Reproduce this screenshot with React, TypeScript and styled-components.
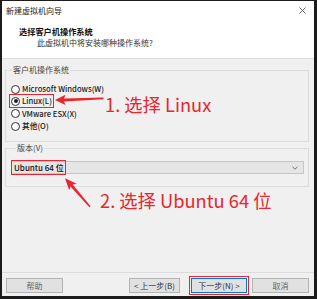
import React from 'react'
import styled, { createGlobalStyle } from 'styled-components'

const RED = '#e8262e'
const FONT = `"Noto Sans CJK SC", "Noto Sans", sans-serif`

const GlobalStyle = createGlobalStyle`
  html, body {
    margin: 0;
    padding: 0;
    background: #fff;
  }
  body {
    font-family: ${FONT};
  }
`

const Window = styled.div`
  position: relative;
  width: 317px;
  height: 299px;
  box-sizing: border-box;
  border-style: solid;
  border-color: #1c1c1c;
  border-width: 1px 3px 3px 2px;
  background: #f0f0f0;
  display: flex;
  flex-direction: column;
  overflow: hidden;
`

const TitleBar = styled.div`
  height: 19px;
  flex: none;
  background: #fff;
  display: flex;
  align-items: center;
  justify-content: space-between;
  padding: 0 8px 0 4px;
  font-size: 8px;
  color: #222;
`

const Header = styled.div`
  height: 39px;
  flex: none;
  box-sizing: border-box;
  background: #fff;
  border-bottom: 1px solid #dcdcdc;
  padding: 6px 0 0 17px;
`

const HeaderTitle = styled.div`
  font-size: 8.2px;
  line-height: 10px;
  font-weight: 700;
  color: #111;
`

const HeaderSub = styled.div`
  margin: 2px 0 0 18px;
  font-size: 8px;
  line-height: 10px;
  color: #333;
`

const Body = styled.div`
  flex: 1;
  display: flex;
  flex-direction: column;
`

const Group = styled.fieldset<{ $top: number; $pb: number }>`
  margin: ${(p) => p.$top}px 5px 0 3px;
  padding: 0 4px ${(p) => p.$pb}px 5px;
  border: 1px solid #dcdcdc;
  min-inline-size: 0;
`

const Legend = styled.legend<{ $indent: number }>`
  margin-left: ${(p) => p.$indent}px;
  padding: 0 1px;
  font-size: 8px;
  line-height: 10px;
  color: #444;
`

const RadioList = styled.div`
  padding-top: 8px;
  display: flex;
  flex-direction: column;
`

const RadioRow = styled.div`
  height: 12.3px;
  display: flex;
  align-items: center;
`

const RadioItem = styled.span<{ $marked?: boolean }>`
  display: inline-flex;
  align-items: center;
  gap: 2px;
  font-size: 7.7px;
  line-height: 10px;
  font-weight: 500;
  color: #1a1a1a;
  outline: ${(p) => (p.$marked ? `1.6px solid ${RED}` : 'none')};
  outline-offset: 1px;
`

const Circle = styled.span<{ $checked?: boolean }>`
  width: 9px;
  height: 9px;
  box-sizing: border-box;
  border-radius: 50%;
  border: 1px solid #333;
  background: #fff;
  display: inline-flex;
  align-items: center;
  justify-content: center;
  &::after {
    content: '';
    width: 4px;
    height: 4px;
    border-radius: 50%;
    background: ${(p) => (p.$checked ? '#222' : 'transparent')};
  }
`

const Select = styled.div`
  margin-top: 8px;
  height: 13px;
  box-sizing: border-box;
  background: #e5e5e5;
  border: 1px solid #c6c6c6;
  display: flex;
  align-items: center;
  justify-content: space-between;
  padding-right: 5px;
`

const SelectValue = styled.span`
  margin-left: -1px;
  padding: 0 1px 0 2px;
  height: 15px;
  box-sizing: border-box;
  display: inline-flex;
  align-items: center;
  border: 1.6px solid ${RED};
  font-size: 8px;
  font-weight: 500;
  color: #111;
`

const Footer = styled.div`
  flex: none;
  border-top: 1px solid #dcdcdc;
  padding: 5px 5px 3px 4px;
  display: flex;
  align-items: center;
`

const Button = styled.div<{ $w: number; $primary?: boolean; $muted?: boolean }>`
  width: ${(p) => p.$w}px;
  height: 15px;
  box-sizing: border-box;
  background: #e1e1e1;
  border: 1px solid ${(p) => (p.$primary ? '#0078d7' : '#b4b4b4')};
  outline: ${(p) => (p.$primary ? `1.6px solid ${RED}` : 'none')};
  outline-offset: 1px;
  display: flex;
  align-items: center;
  justify-content: center;
  font-size: 8px;
  color: ${(p) => (p.$muted ? '#666' : '#333')};
`

const Spring = styled.div`
  flex: 1;
`

const ButtonGroup = styled.div`
  display: flex;
  align-items: center;
`

const Gap = styled.div<{ $w: number }>`
  width: ${(p) => p.$w}px;
`

const Overlay = styled.div`
  position: absolute;
  left: -2px;
  top: -1px;
  width: 317px;
  height: 299px;
  pointer-events: none;
`

const Note = styled.div<{ $x: number; $y: number }>`
  position: absolute;
  left: ${(p) => p.$x}px;
  top: ${(p) => p.$y}px;
  font-size: 18.3px;
  line-height: 20px;
  color: ${RED};
  white-space: nowrap;
`

const osList = [
  { label: 'Microsoft Windows(W)' },
  { label: 'Linux(L)', checked: true },
  { label: 'VMware ESX(X)' },
  { label: '其他(O)' },
]

const App: React.FC = () => {
  return (
    <>
      <GlobalStyle />
      <Window>
        <TitleBar>
          <span>新建虚拟机向导</span>
          <svg width="7" height="7" viewBox="0 0 7 7">
            <path d="M0.5 0.5L6.5 6.5M6.5 0.5L0.5 6.5" stroke="#555" strokeWidth="0.9" />
          </svg>
        </TitleBar>
        <Header>
          <HeaderTitle>选择客户机操作系统</HeaderTitle>
          <HeaderSub>此虚拟机中将安装哪种操作系统?</HeaderSub>
        </Header>
        <Body>
          <Group $top={6} $pb={9}>
            <Legend $indent={1}>客户机操作系统</Legend>
            <RadioList>
              {osList.map((os) => (
                <RadioRow key={os.label}>
                  <RadioItem $marked={os.checked}>
                    <Circle $checked={os.checked} />
                    {os.label}
                  </RadioItem>
                </RadioRow>
              ))}
            </RadioList>
          </Group>
          <Group $top={1} $pb={12}>
            <Legend $indent={5}>版本(V)</Legend>
            <Select>
              <SelectValue>Ubuntu 64 位</SelectValue>
              <svg width="6" height="4" viewBox="0 0 6 4">
                <path d="M0.5 0.8L3 3.2L5.5 0.8" fill="none" stroke="#666" strokeWidth="0.9" />
              </svg>
            </Select>
          </Group>
        </Body>
        <Footer>
          <Button $w={57} $muted>
            帮助
          </Button>
          <Spring />
          <ButtonGroup>
            <Button $w={51}>&lt; 上一步(B)</Button>
            <Gap $w={11} />
            <Button $w={56} $primary>
              下一步(N) &gt;
            </Button>
            <Gap $w={5} />
            <Button $w={57} $muted>
              取消
            </Button>
          </ButtonGroup>
        </Footer>
        <Overlay>
          <svg width="317" height="299" viewBox="0 0 317 299">
            <polygon
              points="55,100 65.5,94.8 64,98.4 103.5,97.6 103.5,99.2 64,101.4 65.5,105"
              fill={RED}
            />
            <polygon
              points="65,178.3 76.7,183.7 72.7,184.5 90.6,206.2 89.4,207.2 70.5,186.5 69.2,190.3"
              fill={RED}
            />
          </svg>
          <Note $x={105} $y={94}>
            1. 选择 Linux
          </Note>
          <Note $x={100} $y={190}>
            2. 选择 Ubuntu 64 位
          </Note>
        </Overlay>
      </Window>
    </>
  )
}

export default App
